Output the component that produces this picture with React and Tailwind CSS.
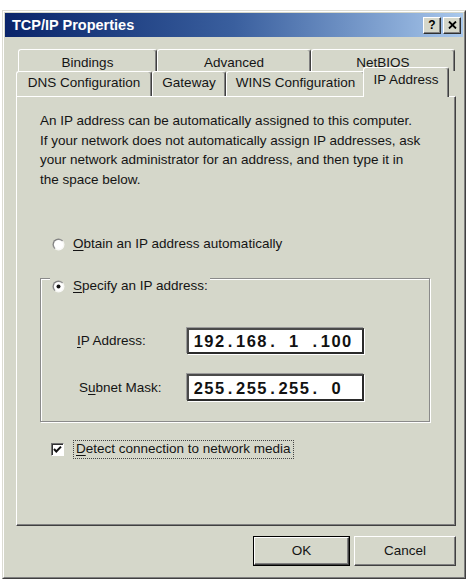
import React from "react";

function Radio({ checked }) {
  return (
    <svg width="13" height="13" viewBox="0 0 13 13" className="shrink-0">
      <defs>
        <linearGradient id={checked ? "rg1" : "rg0"} x1="0" y1="0" x2="1" y2="1">
          <stop offset="0" stopColor="#6e6e6e" />
          <stop offset="0.5" stopColor="#9a9a9a" />
          <stop offset="0.55" stopColor="#f4f4f0" />
          <stop offset="1" stopColor="#ffffff" />
        </linearGradient>
      </defs>
      <circle cx="6.5" cy="6.5" r="6" fill={`url(#${checked ? "rg1" : "rg0"})`} />
      <circle cx="6.5" cy="6.5" r="4.6" fill="#ffffff" />
      {checked && <circle cx="6.5" cy="6.5" r="2" fill="#111" />}
    </svg>
  );
}

function Checkbox() {
  return (
    <div className="w-[13px] h-[13px] shrink-0 bg-white border border-t-[#707070] border-l-[#707070] border-r-white border-b-white shadow-[inset_1px_1px_0_#303030] flex items-center justify-center">
      <svg width="9" height="9" viewBox="0 0 9 9">
        <path d="M1 4 L3.3 6.5 L8 1.6" fill="none" stroke="#111" strokeWidth="2" />
      </svg>
    </div>
  );
}

function TitleBtn({ children }) {
  return (
    <div className="w-[18px] h-[17px] bg-[#d5d7ca] border border-t-white border-l-white border-r-[#303030] border-b-[#303030] shadow-[inset_-1px_-1px_0_#808080] flex items-center justify-center">
      {children}
    </div>
  );
}

function IpText({ value }) {
  return (
    <span className="flex font-['Liberation_Sans',Arial,sans-serif] font-bold text-[16.5px] leading-none text-[#111]">
      {value.split("").map((c, i) => (
        <span key={i} className="inline-block w-[10.6px] text-center">
          {c === " " ? "\u00a0" : c}
        </span>
      ))}
    </span>
  );
}

export default function App() {
  return (
    <div className="min-h-[579px] w-[467px] bg-white pt-[10px] pl-[2px] font-['Liberation_Sans',Arial,sans-serif] text-[13.5px] text-[#141414] overflow-hidden">
      <div className="w-[464px] h-[569px] border border-t-[#dcdcd4] border-l-[#dcdcd4] border-r-[#404040] border-b-[#404040]">
        <div className="h-full border border-t-white border-l-white border-r-[#808080] border-b-[#808080] bg-[#d5d7ca] p-px">
          {/* Title bar */}
          <div className="h-[24px] flex items-center justify-between bg-linear-to-r from-[#0a246a] via-[#3a5f9e] to-[#a9c8ec] pl-[7px] pr-[2px]">
            <span className="text-white font-bold text-[14.5px] leading-none">TCP/IP Properties</span>
            <div className="flex gap-[2px]">
              <TitleBtn>
                <span className="font-bold text-[12px] leading-none text-black">?</span>
              </TitleBtn>
              <TitleBtn>
                <svg width="9" height="8" viewBox="0 0 9 8">
                  <path d="M1 0.5 L8 7.5 M8 0.5 L1 7.5" stroke="#000" strokeWidth="1.8" />
                </svg>
              </TitleBtn>
            </div>
          </div>

          {/* Back tab row */}
          <div className="mt-[12px] ml-[13px] flex h-[22px]">
            <div className="w-[139px] h-[22px] flex justify-center pt-[5px] leading-[16px] border-t border-l border-t-white border-l-white border-r border-r-[#404040] shadow-[inset_-1px_0_0_#808080] rounded-t-[3px]">
              Bindings
            </div>
            <div className="w-[154px] h-[22px] flex justify-center pt-[5px] leading-[16px] border-t border-l border-t-white border-l-white border-r border-r-[#404040] shadow-[inset_-1px_0_0_#808080] rounded-t-[3px]">
              Advanced
            </div>
            <div className="w-[144px] h-[22px] flex justify-center pt-[5px] leading-[16px] border-t border-l border-t-white border-l-white border-r border-r-[#404040] shadow-[inset_-1px_0_0_#808080] rounded-t-[3px]">
              NetBIOS
            </div>
          </div>

          {/* Front tab row */}
          <div className="ml-[11px] flex items-end h-[25px]">
            <div className="w-[136px] h-[25px] flex justify-center pt-[3px] leading-[16px] border-t border-l border-t-white border-l-white border-r border-r-[#404040] shadow-[inset_-1px_0_0_#808080] rounded-t-[3px]">
              DNS Configuration
            </div>
            <div className="w-[74px] h-[25px] flex justify-center pt-[3px] leading-[16px] border-t border-l border-t-white border-l-white border-r border-r-[#404040] shadow-[inset_-1px_0_0_#808080] rounded-t-[3px]">
              Gateway
            </div>
            <div className="w-[139px] h-[25px] flex justify-center pt-[3px] leading-[16px] border-t border-l border-t-white border-l-white border-r border-r-[#404040] shadow-[inset_-1px_0_0_#808080] rounded-t-[3px]">
              WINS Configuration
            </div>
            <div className="relative z-10 -ml-[2px] -mb-px w-[86px] h-[30px] bg-[#d5d7ca] flex justify-center pt-[4px] leading-[16px] border-t border-l border-t-white border-l-white border-r border-r-[#404040] shadow-[inset_-1px_0_0_#808080] rounded-t-[3px]">
              IP Address
            </div>
          </div>

          {/* Panel */}
          <div className="ml-[11px] w-[440px] h-[430px] border border-t-white border-l-white border-r-[#404040] border-b-[#404040] shadow-[inset_-1px_-1px_0_#808080] pt-[14px] pl-[23px]">
            <p className="leading-[19.5px] whitespace-nowrap">
              An IP address can be automatically assigned to this computer.
              <br />
              If your network does not automatically assign IP addresses, ask
              <br />
              your network administrator for an address, and then type it in
              <br />
              the space below.
            </p>

            <div className="mt-[46px] ml-[12px] h-[18px] flex items-center gap-[8px]">
              <Radio checked={false} />
              <span>
                <span className="underline underline-offset-2">O</span>btain an IP address automatically
              </span>
            </div>

            {/* Group box */}
            <div className="mt-[25px] w-[390px] h-[144px] border border-[#8a8a8a] shadow-[inset_1px_1px_0_#ffffff,1px_1px_0_#ffffff]">
              <div className="-mt-[14px] ml-[9px] px-[2px] h-[18px] inline-flex items-center gap-[8px] bg-[#d5d7ca]">
                <Radio checked={true} />
                <span>
                  <span className="underline underline-offset-2">S</span>pecify an IP address:
                </span>
              </div>

              <div className="mt-[29px] pl-[36px] flex items-center">
                <span className="w-[110px]">
                  <span className="underline underline-offset-2">I</span>P Address:
                </span>
                <div className="w-[177px] h-[26px] bg-white border-2 border-t-[#4a4a4a] border-l-[#4a4a4a] border-r-[#2a2a2a] border-b-[#2a2a2a] shadow-[-1px_-1px_0_#9a9a9a,1px_1px_0_#ffffff] flex items-center pl-[4px]">
                  <IpText value="192.168. 1 .100" />
                </div>
              </div>

              <div className="mt-[20px] pl-[36px] flex items-center">
                <span className="w-[110px] pl-[2px]">
                  S<span className="underline underline-offset-2">u</span>bnet Mask:
                </span>
                <div className="w-[177px] h-[27px] bg-white border-2 border-t-[#4a4a4a] border-l-[#4a4a4a] border-r-[#2a2a2a] border-b-[#2a2a2a] shadow-[-1px_-1px_0_#9a9a9a,1px_1px_0_#ffffff] flex items-center pl-[4px]">
                  <IpText value="255.255.255. 0" />
                </div>
              </div>
            </div>

            {/* Checkbox */}
            <div className="mt-[18px] ml-[11px] flex items-center gap-[9px]">
              <Checkbox />
              <span className="h-[19px] px-[2px] flex items-center border border-dotted border-[#444]">
                <span>
                  <span className="underline underline-offset-2">D</span>etect connection to network media
                </span>
              </span>
            </div>
          </div>

          {/* Buttons */}
          <div className="mt-[10px] ml-[11px] w-[440px] flex justify-end gap-[4px]">
            <div className="w-[97px] h-[30px] border border-black">
              <div className="h-full border border-t-white border-l-white border-r-[#404040] border-b-[#404040] shadow-[inset_-1px_-1px_0_#808080] flex items-center justify-center">
                OK
              </div>
            </div>
            <div className="w-[102px] h-[30px] border border-t-white border-l-white border-r-[#404040] border-b-[#404040] shadow-[inset_-1px_-1px_0_#808080] flex items-center justify-center">
              Cancel
            </div>
          </div>
        </div>
      </div>
    </div>
  );
}
